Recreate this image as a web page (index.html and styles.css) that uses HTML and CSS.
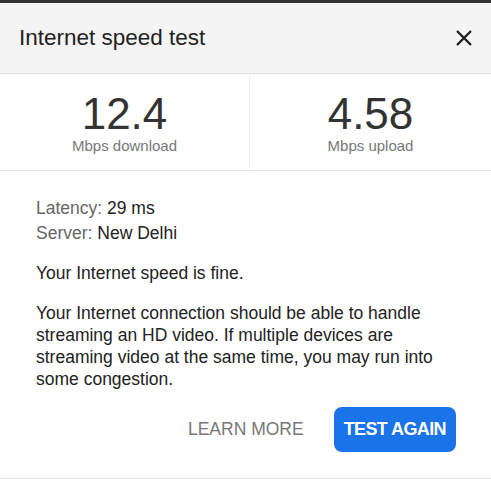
FILE: index.html
```html
<!DOCTYPE html>
<html>
<head>
<meta charset="utf-8">
<link rel="stylesheet" href="styles.css">
</head>
<body>
<div class="card">
  <div class="header">
    <span class="title">Internet speed test</span>
    <svg class="close" width="18" height="18" viewBox="0 0 18 18"><path d="M2 2 L16 16 M16 2 L2 16" stroke="#222" stroke-width="2.4" fill="none"/></svg>
  </div>
  <div class="stats">
    <div class="stat">
      <div class="num">12.4</div>
      <div class="label">Mbps download</div>
    </div>
    <div class="stat">
      <div class="num">4.58</div>
      <div class="label">Mbps upload</div>
    </div>
  </div>
  <div class="content">
    <div class="meta">
      <div><span class="key">Latency:</span> 29 ms</div>
      <div><span class="key">Server:</span> New Delhi</div>
    </div>
    <p class="msg">Your Internet speed is fine.</p>
    <p class="msg">Your Internet connection should be able to handle streaming an HD video. If multiple devices are streaming video at the same time, you may run into some congestion.</p>
    <div class="actions">
      <span class="learn">LEARN MORE</span>
      <span class="again">TEST AGAIN</span>
    </div>
  </div>
</div>
</body>
</html>
```
FILE: styles.css
```css
html, body { margin: 0; padding: 0; background: #fff; }
body { font-family: "Liberation Sans", Arial, sans-serif; }
.card { width: 491px; border-top: 3px solid #333; border-bottom: 1px solid #e6e6e6; height: 475px; box-sizing: content-box; }
.header { height: 71px; background: #f4f4f4; border-bottom: 1px solid #dcdcdc; display: flex; align-items: center; justify-content: space-between; padding: 0 18px 0 19px; box-sizing: border-box; }
.title { font-size: 22.5px; color: #222; }
.close { display: block; }
.stats { display: grid; grid-template-columns: 249px 1fr; height: 97px; border-bottom: 1px solid #e8e8e8; box-sizing: border-box; }
.stat { display: flex; flex-direction: column; align-items: center; padding-top: 18px; }
.stat + .stat { border-left: 1px solid #eee; }
.num { font-size: 44px; color: #333; line-height: 44px; }
.label { font-size: 15px; color: #777; line-height: 18px; margin-top: 1px; }
.content { padding: 25px 35px 0 36px; font-size: 17.5px; color: #222; }
.meta { line-height: 25px; }
.key { color: #666; }
.msg { margin: 16px 0 0; line-height: 22px; }
.msg + .msg { margin-top: 18px; }
.actions { display: flex; justify-content: flex-end; align-items: center; margin-top: 17px; gap: 30px; }
.learn { color: #777; font-size: 17.5px; }
.again { background: #1a73e8; color: #fff; font-size: 18px; font-weight: bold; border-radius: 8px; height: 45px; padding: 0 10px; display: flex; align-items: center; letter-spacing: -0.6px; }
```
